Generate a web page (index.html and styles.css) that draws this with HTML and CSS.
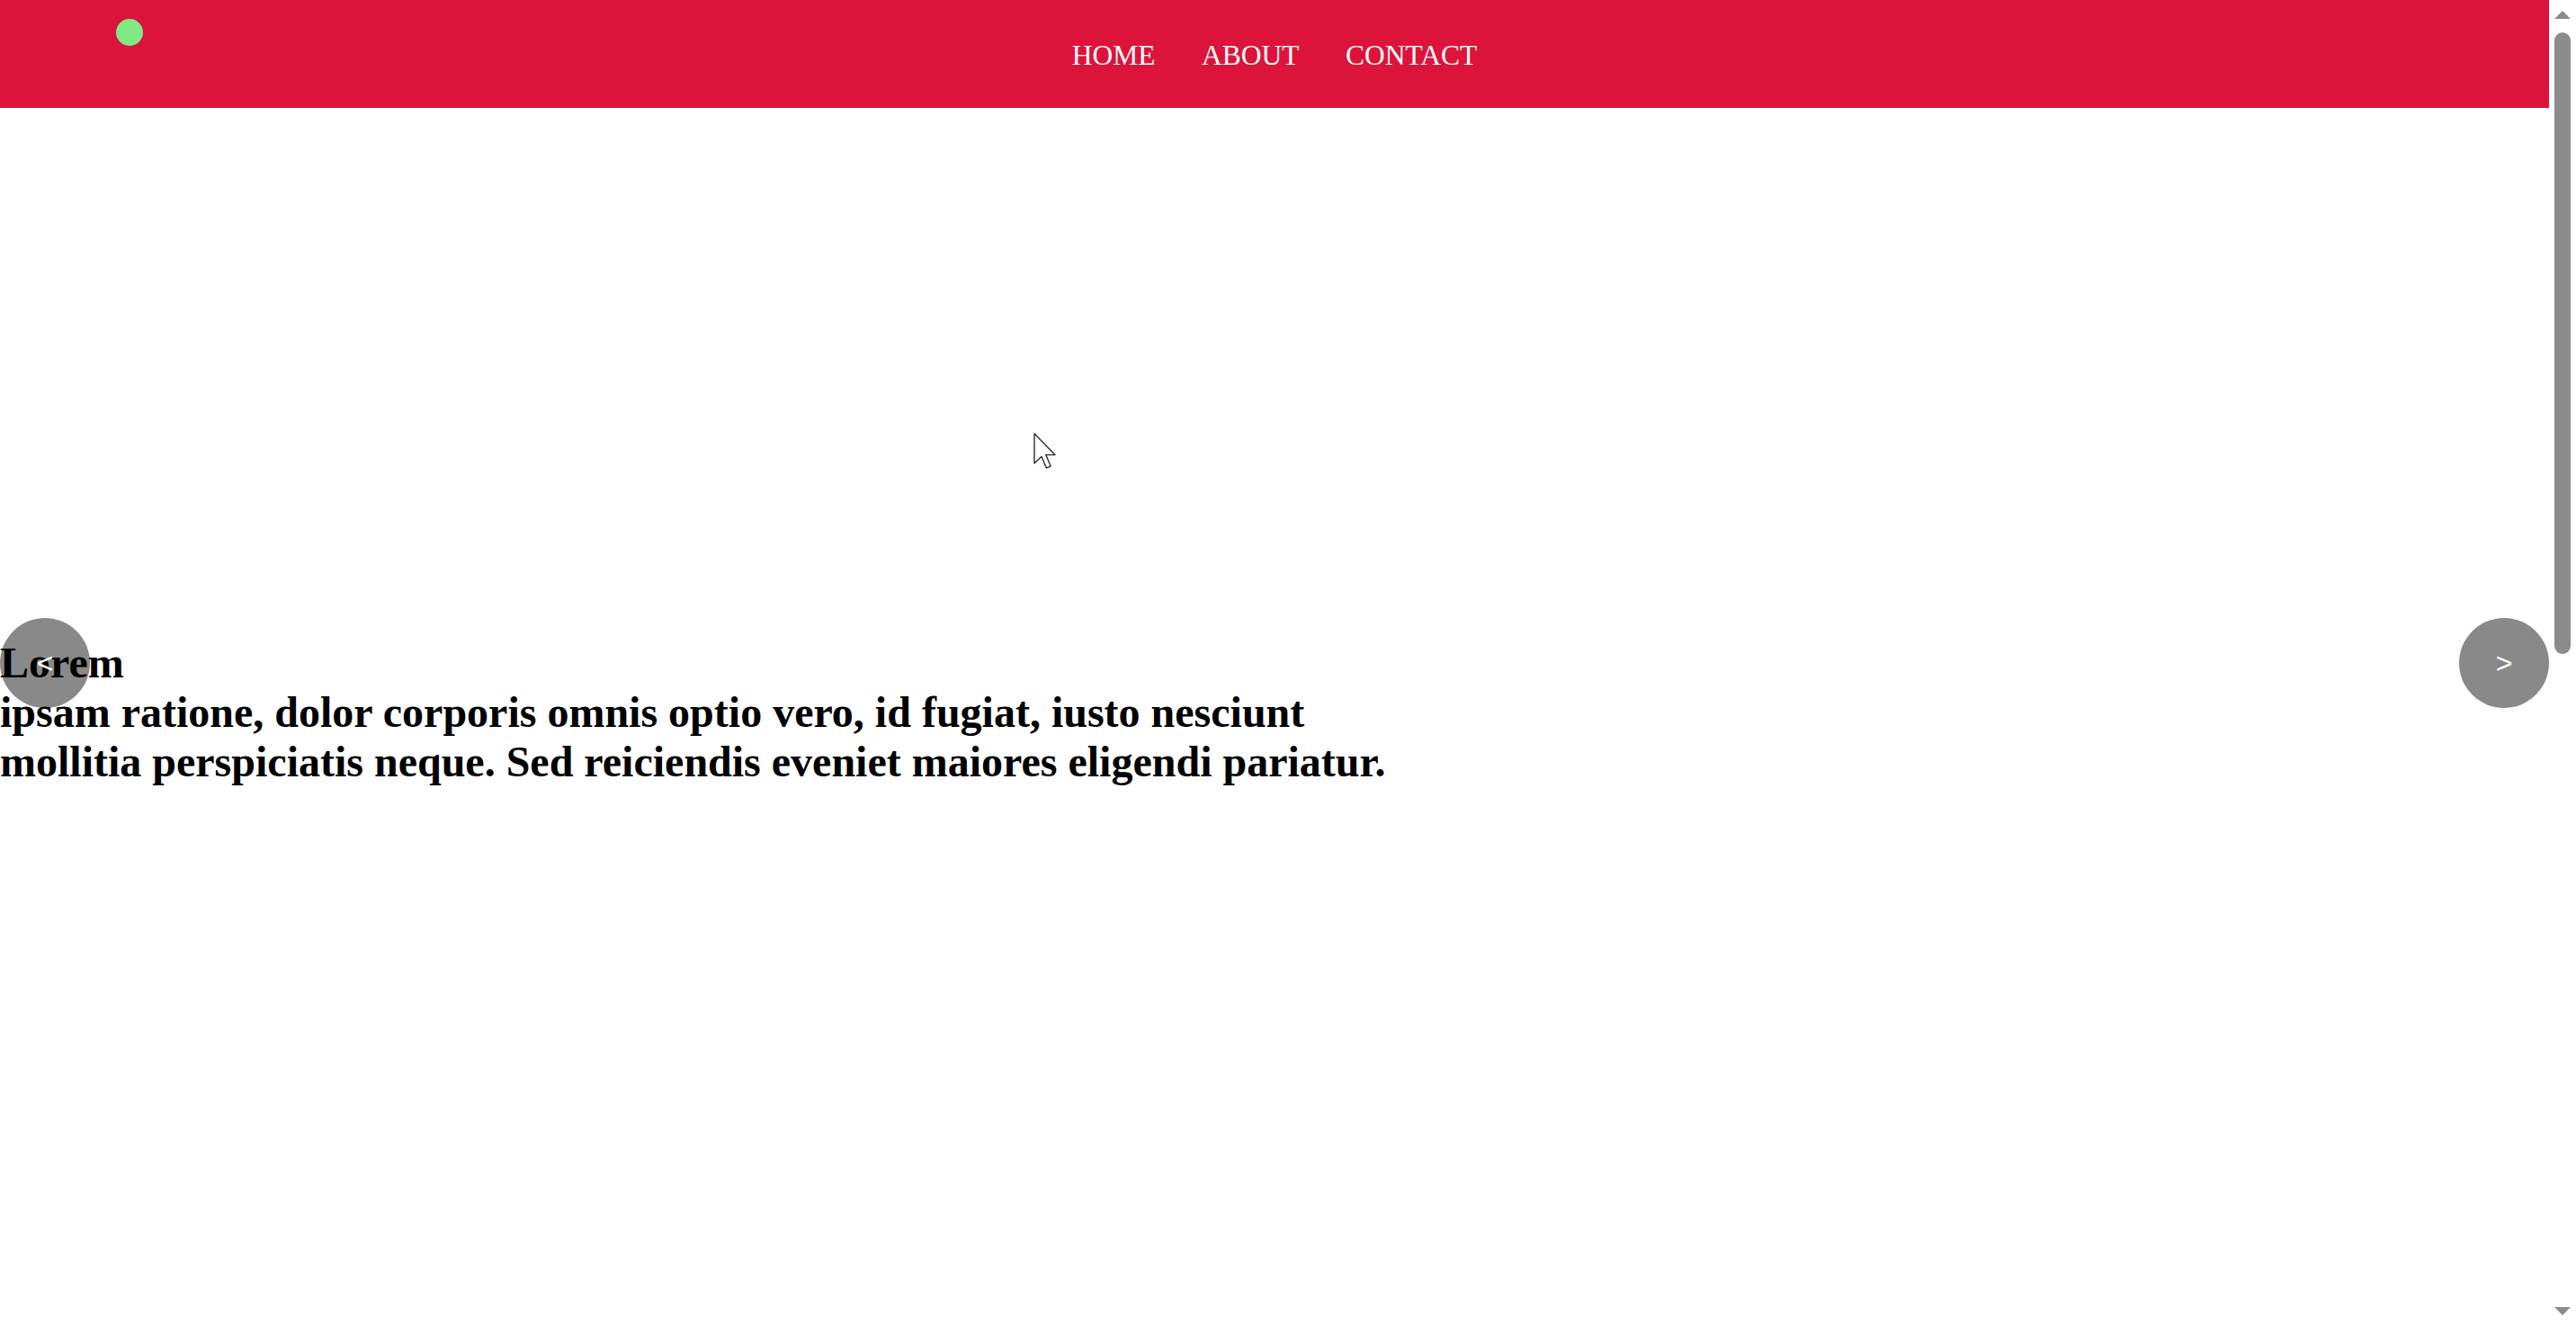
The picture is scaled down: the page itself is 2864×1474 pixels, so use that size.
FILE: index.html
```html
<!DOCTYPE html>
<html lang="en">
<head>
<meta charset="utf-8">
<title>Slider</title>
<link rel="stylesheet" href="styles.css">
</head>
<body>
<header class="topbar">
  <div class="logo"></div>
  <nav class="menu">
    <a class="menu-link" href="#">HOME</a>
    <a class="menu-link" href="#">ABOUT</a>
    <a class="menu-link" href="#">CONTACT</a>
  </nav>
  <div class="topbar-end"></div>
</header>

<main class="page">
  <section class="slider">
    <div class="slide">
      <h2 class="slide-title">Lorem</h2>
      <p class="slide-text">ipsam ratione, dolor corporis omnis optio vero, id fugiat, iusto nesciunt mollitia perspiciatis neque. Sed reiciendis eveniet maiores eligendi pariatur.</p>
    </div>
    <button class="slider-btn slider-btn-prev" type="button">&lt;</button>
    <button class="slider-btn slider-btn-next" type="button">&gt;</button>
  </section>
  <section class="after"></section>
</main>

<div class="scrollrail" aria-hidden="true">
  <svg class="scroll-arrow" width="18" height="9" viewBox="0 0 18 9"><path d="M0 9 L9 0 L18 9 Z" fill="#8b8b8b"/></svg>
  <div class="scroll-thumb"></div>
  <svg class="scroll-arrow scroll-arrow-down" width="18" height="9" viewBox="0 0 18 9"><path d="M0 0 L18 0 L9 9 Z" fill="#8b8b8b"/></svg>
</div>

<svg class="cursor" width="26" height="42" viewBox="0 0 13 21" aria-hidden="true">
  <path d="M0.5 0.5 L0.5 17 L4.5 13.2 L7.2 19.6 L9.6 18.6 L6.9 12.3 L12 12.3 Z" fill="#ffffff" stroke="#2a2d3e" stroke-width="0.7" stroke-linejoin="round"/>
</svg>
</body>
</html>
```

FILE: styles.css
```css
html, body {
  margin: 0;
  padding: 0;
}

body {
  background: #fefefe;
  font-family: "Liberation Serif", "Times New Roman", serif;
  color: #000;
}

.topbar {
  position: fixed;
  top: 0;
  left: 0;
  right: 30px;
  z-index: 10;
  height: 120px;
  background: #dc143c;
  display: grid;
  grid-template-columns: 1fr auto 1fr;
}

.logo {
  align-self: start;
  justify-self: start;
  width: 30px;
  height: 30px;
  margin: 21px 0 0 129px;
  border-radius: 50%;
  background: #80e985;
}

.menu {
  align-self: center;
  display: flex;
  gap: 51.5px;
  margin-top: 3px;
}

.menu-link {
  color: #ffffff;
  text-decoration: none;
  font-size: 31.5px;
  line-height: 1;
}

.page {
  margin-right: 30px;
}

.slider {
  position: relative;
  height: 100vh;
}

.slide {
  padding-top: calc(50vh - 28px);
  max-width: 1580px;
}

.slide-title,
.slide-text {
  margin: 0;
  font-size: 48px;
  font-weight: bold;
  line-height: normal;
}

.slider-btn {
  position: absolute;
  top: 50%;
  transform: translateY(-50%);
  width: 100px;
  height: 100px;
  padding: 0;
  border: none;
  border-radius: 50%;
  background: rgba(0, 0, 0, 0.46);
  color: #ffffff;
  font-family: "Liberation Sans", Arial, sans-serif;
  font-size: 32px;
  z-index: 2;
}

.slider-btn-prev {
  left: 0;
}

.slider-btn-next {
  right: 0;
}

.after {
  height: 1542px;
}

.scrollrail {
  position: fixed;
  top: 0;
  right: 0;
  bottom: 0;
  width: 30px;
  z-index: 30;
  background: #fefefe;
  box-sizing: border-box;
  padding: 12px 6px 12px;
  display: flex;
  flex-direction: column;
  align-items: center;
}

.scroll-arrow {
  display: block;
  flex: none;
}

.scroll-thumb {
  flex: none;
  width: 18px;
  height: 691px;
  margin-top: 15px;
  border-radius: 9px;
  background: #8b8b8b;
}

.scroll-arrow-down {
  margin-top: auto;
}

.cursor {
  position: absolute;
  left: 1149px;
  top: 481px;
  z-index: 20;
  pointer-events: none;
}
```
